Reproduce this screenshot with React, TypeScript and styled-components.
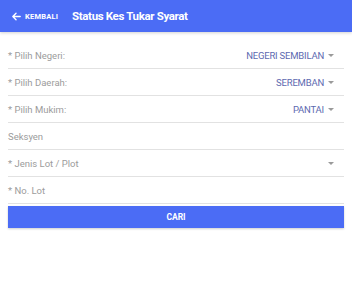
import React from "react";
import styled, { createGlobalStyle } from "styled-components";

const Global = createGlobalStyle`
  html, body { margin: 0; padding: 0; background: #fff; }
  body { font-family: Roboto, "Noto Sans", Arial, sans-serif; }
  * { box-sizing: border-box; }
`;

const Page = styled.div`
  width: 352px;
  min-height: 300px;
  background: #fff;
`;

const Header = styled.header`
  height: 32px;
  background: #4b6cf5;
  display: flex;
  align-items: center;
  padding-left: 11px;
  box-shadow: 0 1px 3px rgba(0, 0, 0, 0.18);
`;

const Back = styled.button`
  display: flex;
  align-items: center;
  gap: 3px;
  border: 0;
  background: transparent;
  color: #fff;
  padding: 0;
  font-family: Roboto, Arial, sans-serif;
  font-size: 7.5px;
  font-weight: 700;
  letter-spacing: 0.2px;
`;

const Title = styled.h1`
  margin: 0 0 0 14px;
  color: #fff;
  font-size: 11.5px;
  font-weight: 700;
  letter-spacing: -0.35px;
  font-family: Roboto, Arial, sans-serif;
`;

const Form = styled.div`
  padding: 10px 8px 0 8px;
  display: flex;
  flex-direction: column;
`;

const Row = styled.div`
  height: 27px;
  border-bottom: 1px solid #e2e2e2;
  display: flex;
  align-items: center;
  justify-content: space-between;
  padding-right: 10px;
`;

const Label = styled.span`
  font-size: 9.5px;
  color: #9c9c9c;
`;

const Value = styled.span`
  display: flex;
  align-items: center;
  gap: 4px;
  font-size: 9.5px;
  letter-spacing: -0.2px;
  color: #5d6ab0;
  text-transform: uppercase;
`;

const Caret = styled.span`
  width: 0;
  height: 0;
  border-left: 3px solid transparent;
  border-right: 3px solid transparent;
  border-top: 3px solid #9a9a9a;
`;

const SearchButton = styled.button`
  margin-top: 2px;
  height: 22px;
  width: 100%;
  border: 0;
  background: #4b6cf5;
  color: #fff;
  font-family: Roboto, Arial, sans-serif;
  font-size: 8.5px;
  font-weight: 700;
  box-shadow: 0 1px 2px rgba(0, 0, 0, 0.2);
`;

const rows: { label: string; value?: string; caret?: boolean }[] = [
  { label: "* Pilih Negeri:", value: "Negeri Sembilan", caret: true },
  { label: "* Pilih Daerah:", value: "Seremban", caret: true },
  { label: "* Pilih Mukim:", value: "Pantai", caret: true },
  { label: "Seksyen" },
  { label: "* Jenis Lot / Plot", value: "", caret: true },
  { label: "* No. Lot" },
];

export default function App() {
  return (
    <Page>
      <Global />
      <Header>
        <Back>
          <svg width="11" height="11" viewBox="0 0 24 24" fill="none" stroke="#fff" strokeWidth="3" strokeLinecap="round" strokeLinejoin="round">
            <path d="M20 12H5M11 5l-7 7 7 7" />
          </svg>
          KEMBALI
        </Back>
        <Title>Status Kes Tukar Syarat</Title>
      </Header>
      <Form>
        {rows.map((r) => (
          <Row key={r.label}>
            <Label>{r.label}</Label>
            {r.caret && (
              <Value>
                {r.value}
                <Caret />
              </Value>
            )}
          </Row>
        ))}
        <SearchButton>CARI</SearchButton>
      </Form>
    </Page>
  );
}
